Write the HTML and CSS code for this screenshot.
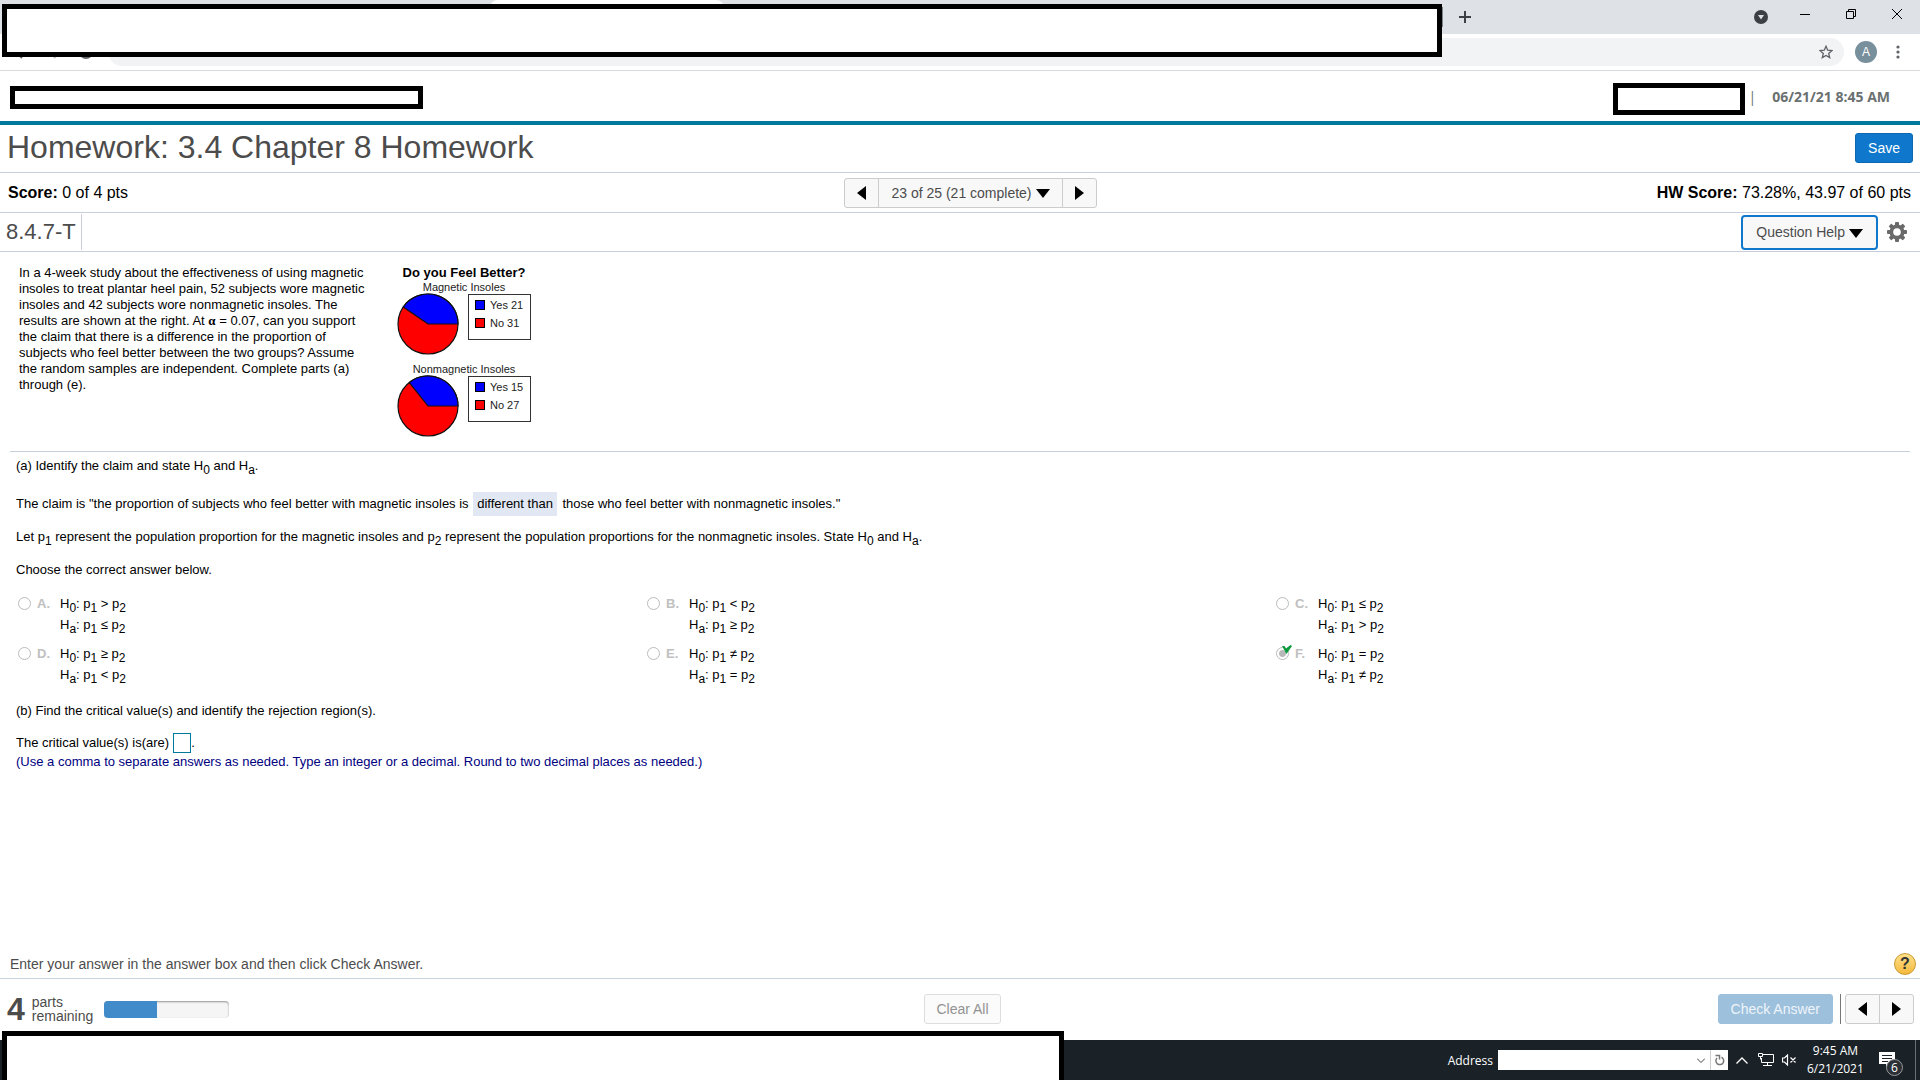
FILE: index.html
```
<!DOCTYPE html>
<html lang="en">
<head>
  <meta charset="UTF-8">
  <meta name="viewport" content="width=device-width, initial-scale=1.0">
  <title>Homework: 3.4 Chapter 8 Homework</title>
  <link rel="stylesheet" href="styles.css">
</head>
<body>
  <!-- browser chrome -->
  <div class="browser">
    <div class="tab-strip">
      <div class="tab"></div>
      <span class="tab-divider"></span>
      <button class="icon-button new-tab" aria-label="New tab">
        <svg width="12" height="12" viewBox="0 0 12 12"><path d="M6 0v12M0 6h12" stroke="#3c4043" stroke-width="2"/></svg>
      </button>
      <div class="window-controls">
        <button class="icon-button tab-search" aria-label="Search tabs">
          <svg width="14" height="14" viewBox="0 0 14 14"><circle cx="7" cy="7" r="7" fill="#3c4043"/><path d="M4 5h6l-3 4.500z" fill="#dee1e6"/></svg>
        </button>
        <button class="icon-button" aria-label="Minimize">
          <svg width="10" height="10" viewBox="0 0 10 10"><path d="M0 5.500h10" stroke="#000"/></svg>
        </button>
        <button class="icon-button" aria-label="Restore">
          <svg width="10" height="10" viewBox="0 0 10 10"><path d="M.5 2.500h7v7h-7zM2.500 2.500v-2h7v7h-2" fill="none" stroke="#000"/></svg>
        </button>
        <button class="icon-button" aria-label="Close">
          <svg width="10" height="10" viewBox="0 0 10 10"><path d="M0 0l10 10M10 0L0 10" stroke="#000"/></svg>
        </button>
      </div>
    </div>
    <div class="toolbar">
      <div class="nav-icons">
        <svg width="90" height="26" viewBox="0 0 90 26"><path d="M8 13l6 6" stroke="#5f6368" stroke-width="2"/><path d="M52 13l-6 6" stroke="#babcbe" stroke-width="2"/><circle cx="78" cy="13" r="6" fill="none" stroke="#5f6368" stroke-width="2"/></svg>
      </div>
      <div class="omnibox">
        <button class="icon-button" aria-label="Bookmark this tab">
          <svg width="14" height="14" viewBox="0 0 14 14"><path d="M7 1.200l1.700 4 4.300.4-3.300 2.800 1 4.200L7 10.400l-3.700 2.200 1-4.200L1 5.600l4.300-.4z" fill="none" stroke="#5f6368" stroke-width="1.300"/></svg>
        </button>
      </div>
      <span class="avatar">A</span>
      <button class="icon-button" aria-label="Menu">
        <svg width="4" height="14" viewBox="0 0 4 14" fill="#5f6368"><circle cx="2" cy="2" r="1.600"/><circle cx="2" cy="7" r="1.600"/><circle cx="2" cy="12" r="1.600"/></svg>
      </button>
    </div>
    <div class="redacted redacted-address"></div>
  </div>

  <header class="site-header">
    <div class="redacted course"></div>
    <div class="user-info">
      <div class="redacted user"></div>
      <span class="pipe">|</span>
      <span class="date">06/21/21 8:45 AM</span>
    </div>
  </header>

  <div class="title-row">
    <h1>Homework: 3.4 Chapter 8 Homework</h1>
    <button class="btn btn-primary">Save</button>
  </div>

  <div class="score-row">
    <div><b>Score:</b> 0 of 4 pts</div>
    <div class="btn-group question-nav">
      <button class="btn arrow" aria-label="Previous question"><svg width="9" height="14" viewBox="0 0 9 14"><path d="M9 0v14L0 7z"/></svg></button>
      <button class="btn">23 of 25 (21 complete)<svg class="caret" width="14" height="9" viewBox="0 0 14 9"><path d="M0 0h14L7 9z"/></svg></button>
      <button class="btn arrow" aria-label="Next question"><svg width="9" height="14" viewBox="0 0 9 14"><path d="M0 0v14l9-7z"/></svg></button>
    </div>
    <div class="hw-score"><b>HW Score:</b> 73.28%, 43.97 of 60 pts</div>
  </div>

  <div class="exercise-row">
    <h2>8.4.7-T</h2>
    <button class="btn question-help">Question Help<svg class="caret" width="14" height="9" viewBox="0 0 14 9"><path d="M0 0h14L7 9z"/></svg></button>
    <button class="icon-button" aria-label="Settings">
      <svg width="20" height="20" viewBox="0 0 20 20">
        <g fill="#6a6a6a">
          <rect x="8" y="0" width="4" height="20" rx="1"/>
          <rect x="8" y="0" width="4" height="20" rx="1" transform="rotate(45 10 10)"/>
          <rect x="8" y="0" width="4" height="20" rx="1" transform="rotate(90 10 10)"/>
          <rect x="8" y="0" width="4" height="20" rx="1" transform="rotate(135 10 10)"/>
          <circle cx="10" cy="10" r="7.500"/>
        </g>
        <circle cx="10" cy="10" r="3.800" fill="#fff"/>
      </svg>
    </button>
  </div>

  <main>
    <section class="question">
      <p class="prompt">In a 4-week study about the effectiveness of using magnetic insoles to treat plantar heel pain, 52 subjects wore magnetic insoles and 42 subjects wore nonmagnetic insoles. The results are shown at the right. At <span class="alpha">α</span> = 0.07, can you support the claim that there is a difference in the proportion of subjects who feel better between the two groups? Assume the random samples are independent. Complete parts (a) through (e).</p>
      <div class="charts">
        <h3>Do you Feel Better?</h3>
        <h4>Magnetic Insoles</h4>
        <div class="chart">
          <svg width="62" height="62" viewBox="-31 -31 62 62" stroke="#111" stroke-width="1.200">
            <circle r="30" fill="#f00"/>
            <path d="M0 0H30A30 30 0 0 0 -24.700 -17z" fill="#00f"/>
          </svg>
          <ul class="legend">
            <li><i class="yes"></i>Yes 21</li>
            <li><i class="no"></i>No 31</li>
          </ul>
        </div>
        <h4>Nonmagnetic Insoles</h4>
        <div class="chart">
          <svg width="62" height="62" viewBox="-31 -31 62 62" stroke="#111" stroke-width="1.200">
            <circle r="30" fill="#f00"/>
            <path d="M0 0H30A30 30 0 0 0 -18.700 -23.500z" fill="#00f"/>
          </svg>
          <ul class="legend">
            <li><i class="yes"></i>Yes 15</li>
            <li><i class="no"></i>No 27</li>
          </ul>
        </div>
      </div>
    </section>

    <section class="parts">
      <p>(a) Identify the claim and state H<sub>0</sub> and H<sub>a</sub>.</p>
      <p class="claim">The claim is "the proportion of subjects who feel better with magnetic insoles is <span class="answered">different than</span> those who feel better with nonmagnetic insoles."</p>
      <p>Let p<sub>1</sub> represent the population proportion for the magnetic insoles and p<sub>2</sub> represent the population proportions for the nonmagnetic insoles. State H<sub>0</sub> and H<sub>a</sub>.</p>
      <p>Choose the correct answer below.</p>

      <div class="choices">
        <div class="choice">
          <input type="radio" name="hyp" id="a" disabled>
          <label for="a"><b>A.</b><span class="hyp"><span>H<sub>0</sub>: p<sub>1</sub> &gt; p<sub>2</sub></span><span>H<sub>a</sub>: p<sub>1</sub> ≤ p<sub>2</sub></span></span></label>
        </div>
        <div class="choice">
          <input type="radio" name="hyp" id="b" disabled>
          <label for="b"><b>B.</b><span class="hyp"><span>H<sub>0</sub>: p<sub>1</sub> &lt; p<sub>2</sub></span><span>H<sub>a</sub>: p<sub>1</sub> ≥ p<sub>2</sub></span></span></label>
        </div>
        <div class="choice">
          <input type="radio" name="hyp" id="c" disabled>
          <label for="c"><b>C.</b><span class="hyp"><span>H<sub>0</sub>: p<sub>1</sub> ≤ p<sub>2</sub></span><span>H<sub>a</sub>: p<sub>1</sub> &gt; p<sub>2</sub></span></span></label>
        </div>
        <div class="choice">
          <input type="radio" name="hyp" id="d" disabled>
          <label for="d"><b>D.</b><span class="hyp"><span>H<sub>0</sub>: p<sub>1</sub> ≥ p<sub>2</sub></span><span>H<sub>a</sub>: p<sub>1</sub> &lt; p<sub>2</sub></span></span></label>
        </div>
        <div class="choice">
          <input type="radio" name="hyp" id="e" disabled>
          <label for="e"><b>E.</b><span class="hyp"><span>H<sub>0</sub>: p<sub>1</sub> ≠ p<sub>2</sub></span><span>H<sub>a</sub>: p<sub>1</sub> = p<sub>2</sub></span></span></label>
        </div>
        <div class="choice">
          <input type="radio" name="hyp" id="f" checked disabled>
          <svg class="check" width="10" height="9" viewBox="0 0 10 9"><path d="M0 1h2.500l1.500 2.500L8.500 0 10 1 4.500 9z" fill="#0a9a3c"/></svg>
          <label for="f"><b>F.</b><span class="hyp"><span>H<sub>0</sub>: p<sub>1</sub> = p<sub>2</sub></span><span>H<sub>a</sub>: p<sub>1</sub> ≠ p<sub>2</sub></span></span></label>
        </div>
      </div>

      <p class="part-b">(b) Find the critical value(s) and identify the rejection region(s).</p>
      <p class="critical"><label for="critical">The critical value(s) is(are)</label> <input type="text" id="critical">.</p>
      <p class="hint">(Use a comma to separate answers as needed. Type an integer or a decimal. Round to two decimal places as needed.)</p>
    </section>
  </main>

  <div class="instruction">
    <span>Enter your answer in the answer box and then click Check Answer.</span>
    <button class="help" aria-label="Help">?</button>
  </div>

  <footer>
    <div class="remaining">
      <b>4</b>
      <span>parts<br>remaining</span>
      <div class="progress"><div class="progress-bar"></div></div>
    </div>
    <button class="btn clear" disabled>Clear All</button>
    <div class="actions">
      <button class="btn btn-check" disabled>Check Answer</button>
      <span class="separator"></span>
      <div class="btn-group">
        <button class="btn arrow" aria-label="Previous"><svg width="9" height="14" viewBox="0 0 9 14"><path d="M9 0v14L0 7z"/></svg></button>
        <button class="btn arrow" aria-label="Next"><svg width="9" height="14" viewBox="0 0 9 14"><path d="M0 0v14l9-7z"/></svg></button>
      </div>
    </div>
  </footer>

  <!-- windows taskbar -->
  <div class="taskbar">
    <div class="redacted redacted-taskbar"></div>
    <label for="address">Address</label>
    <div class="address-box">
      <input type="text" id="address">
      <svg width="8" height="5" viewBox="0 0 8 5"><path d="M0 .5l4 4 4-4" fill="none" stroke="#444"/></svg>
      <button class="icon-button reload" aria-label="Go">
        <svg width="10" height="12" viewBox="0 0 10 12"><path d="M6.500 3.200A3.900 3.900 0 1 1 2 4M.5 1.500h4v4" fill="none" stroke="#777" stroke-width="1.500"/></svg>
      </button>
    </div>
    <svg class="chevron" width="12" height="7" viewBox="0 0 12 7"><path d="M.5 6.500L6 1l5.500 5.500" fill="none" stroke="#fff" stroke-width="1.300"/></svg>
    <svg class="network" width="16" height="14" viewBox="0 0 16 14"><path d="M5 1.500h10.500v8H3.500V5M9.500 9.500v3M5 12.500h9M.5 .5h4v3h-4zM2.500 3.500v3" fill="none" stroke="#fff"/></svg>
    <svg class="volume" width="15" height="12" viewBox="0 0 15 12"><path d="M.5 4v4h2L5.500 11V1L2.500 4zM8.500 3.500l5 5M13.500 3.500l-5 5" fill="none" stroke="#fff" stroke-width="1.200"/></svg>
    <div class="clock"><span>9:45 AM</span><span>6/21/2021</span></div>
    <div class="notifications">
      <svg width="16" height="16" viewBox="0 0 16 16"><path d="M0 0h16v12h-6l-3 4v-4H0z" fill="#fff"/><path d="M3 3.500h10M3 6.500h10M3 9.500h6" stroke="#1a2228"/></svg>
      <span class="count">6</span>
    </div>
    <span class="show-desktop"></span>
  </div>
</body>
</html>
```
FILE: styles.css
```
* {
  box-sizing: border-box;
}

body {
  margin: 0;
  min-height: 100vh;
  display: flex;
  flex-direction: column;
  font-family: "Liberation Sans", Arial, sans-serif;
  font-size: 13px;
  color: #000;
  background: #fff;
}

h1, h2, h3, h4, p, ul {
  margin: 0;
  padding: 0;
}

svg {
  display: block;
  flex: none;
}

.icon-button {
  display: flex;
  align-items: center;
  justify-content: center;
  padding: 0;
  border: 0;
  background: none;
}

.redacted {
  border: 5px solid #000;
  background: #fff;
}

/* browser */
.browser {
  position: relative;
}

.tab-strip {
  display: flex;
  height: 34px;
  padding-left: 490px;
  background: #dee1e6;
}

.tab {
  width: 234px;
  border-radius: 8px 8px 0 0;
  background: #fff;
}

.tab-divider {
  width: 1px;
  height: 20px;
  margin: 7px 0 0 718px;
  background: #80868b;
}

.new-tab {
  margin-left: 16px;
}

.window-controls {
  display: flex;
  gap: 36px;
  height: 28px;
  margin-left: auto;
  padding-right: 18px;
}

.tab-search {
  margin-right: -4px;
  padding-top: 6px;
}

.toolbar {
  display: flex;
  align-items: center;
  height: 37px;
  padding-right: 20px;
  border-bottom: 1px solid #d9dadd;
}

.nav-icons {
  width: 108px;
  padding-left: 8px;
}

.omnibox {
  flex: 1;
  display: flex;
  justify-content: flex-end;
  height: 28px;
  padding-right: 11px;
  border-radius: 14px;
  background: #f1f3f4;
}

.avatar {
  width: 22px;
  margin: 0 19px 0 11px;
  border-radius: 50%;
  background: #78909c;
  color: #fff;
  font-size: 12px;
  line-height: 22px;
  text-align: center;
}

.redacted-address {
  position: absolute;
  top: 4px;
  left: 2px;
  width: 75%;
  height: 53px;
}

/* site header */
.site-header {
  display: flex;
  justify-content: space-between;
  align-items: center;
  height: 54px;
  padding: 0 30px 0 10px;
  border-bottom: 4px solid #007a9c;
}

.course {
  width: 413px;
  height: 23px;
  margin-top: 2px;
}

.user-info {
  display: flex;
  align-items: center;
  color: #6a7070;
  font: 700 14px "Open Sans", sans-serif;
}

.user {
  width: 132px;
  height: 32px;
  margin-top: 6px;
}

.pipe {
  margin: 0 16px 0 4px;
  font-weight: 400;
}

/* title and score rows */
.title-row, .score-row, .exercise-row {
  display: flex;
  align-items: center;
  border-bottom: 1px solid #c8cddc;
}

.title-row {
  justify-content: space-between;
  height: 48px;
  padding: 0 7px 2px;
}

h1 {
  padding-bottom: 2px;
  color: #4c4c4c;
  font-size: 32px;
  font-weight: 400;
  line-height: 40px;
}

.score-row {
  display: grid;
  grid-template-columns: 1fr auto 1fr;
  height: 40px;
  padding: 0 9px 0 8px;
  font-size: 16px;
}

.question-nav {
  margin-left: 22px;
}

.hw-score {
  text-align: right;
}

.exercise-row {
  gap: 9px;
  height: 39px;
  padding: 0 13px 0 6px;
}

h2 {
  margin-right: auto;
  padding-right: 5px;
  border-right: 1px solid #c8cddc;
  color: #4c4c4c;
  font-size: 22px;
  font-weight: 400;
  line-height: 36px;
}

.btn {
  display: flex;
  align-items: center;
  justify-content: center;
  height: 30px;
  padding: 0 12px;
  border: 1px solid #ccc;
  border-radius: 3px;
  background: #f8f8f8;
  color: #4c4c4c;
  font: 14px "Liberation Sans", Arial, sans-serif;
}

.btn svg {
  fill: #000;
}

.caret {
  margin: 2px 0 0 4px;
}

.btn-primary {
  border-color: #0c68b0;
  background: #0f78cc;
  color: #fff;
}

.btn-group {
  display: flex;
}

.btn-group .btn + .btn {
  margin-left: -1px;
}

.btn-group .btn:not(:first-child) {
  border-top-left-radius: 0;
  border-bottom-left-radius: 0;
}

.btn-group .btn:not(:last-child) {
  border-top-right-radius: 0;
  border-bottom-right-radius: 0;
}

.arrow {
  width: 35px;
  padding: 0;
}

.question-help {
  height: 35px;
  padding: 0 13px;
  border: 2px solid #0f78cc;
  border-radius: 4px;
}

/* question */
main {
  flex: 1;
}

.question {
  display: flex;
  gap: 26px;
  margin: 0 10px;
  padding: 13px 0 6px 9px;
  border-bottom: 1px solid #c8cddc;
}

.prompt {
  width: 352px;
  line-height: 16px;
}

.alpha {
  font-family: "Liberation Serif", serif;
  font-weight: 700;
}

.charts {
  width: 134px;
}

h3 {
  font-size: 13px;
  line-height: 16px;
  text-align: center;
}

h4 {
  color: #222;
  font-size: 11px;
  font-weight: 400;
  line-height: 12px;
  text-align: center;
}

.chart {
  display: flex;
  gap: 9px;
  margin-bottom: 8px;
}

.legend {
  width: 63px;
  height: 46px;
  margin-top: 1px;
  padding: 1px 6px;
  border: 1px solid #333;
  color: #222;
  font-size: 11px;
  line-height: 18px;
  list-style: none;
}

.legend li {
  display: flex;
  align-items: center;
  gap: 5px;
}

.legend i {
  width: 10px;
  height: 10px;
  border: 1px solid #000;
}

.yes {
  background: #00f;
}

.no {
  background: #f00;
}

/* parts */
.parts {
  padding: 6px 17px 0 16px;
}

.parts p {
  margin-bottom: 17px;
  line-height: 16px;
}

sub {
  position: relative;
  top: 4px;
  font-size: 12px;
  line-height: 0;
  vertical-align: baseline;
}

.parts .claim {
  margin: 18px 0 13px;
  line-height: 24px;
}

.answered {
  display: inline-block;
  margin: 0 2px 0 1px;
  padding: 0 4px;
  background: #e1e8f3;
}

.choices {
  display: grid;
  grid-template-columns: repeat(3, 1fr);
  row-gap: 10px;
  padding-bottom: 18px;
}

.choice {
  position: relative;
  display: flex;
  align-items: flex-start;
  gap: 6px;
}

.choice input {
  appearance: none;
  width: 13px;
  height: 13px;
  margin: 2px 0 0 2px;
  border: 1px solid #bbb;
  border-radius: 50%;
  background: #fff;
}

.choice input:checked {
  background: radial-gradient(circle, #b8b8b8 3px, #fff 4px);
}

.choice label {
  display: flex;
  line-height: 21px;
}

.choice b {
  width: 23px;
  color: #c0c0c0;
  line-height: 17px;
}

.hyp {
  display: grid;
  margin-top: -2px;
}

/* green tick over the selected answer */
.check {
  position: absolute;
  top: 0;
  left: 8px;
}

.parts .part-b {
  margin-bottom: 14px;
}

.parts .critical {
  display: flex;
  align-items: center;
  gap: 4px;
  height: 20px;
  margin: 0;
}

.critical input {
  width: 18px;
  height: 20px;
  margin-right: -4px;
  border: 1px solid #007a9c;
}

.parts .hint {
  color: #00007f;
  line-height: 18px;
}

/* bottom */
.instruction {
  display: flex;
  align-items: center;
  justify-content: space-between;
  height: 30px;
  padding: 0 4px 0 10px;
  border-bottom: 1px solid #c8d3dd;
  color: #4c4c4c;
  font-size: 14px;
}

.help {
  width: 22px;
  height: 22px;
  padding: 0;
  border: 1px solid #c99b33;
  border-radius: 50%;
  background: linear-gradient(#ffe08a, #f5b93c);
  color: #333;
  font: 700 16px "Liberation Sans", Arial, sans-serif;
}

footer {
  display: grid;
  grid-template-columns: 1fr auto 1fr;
  align-items: center;
  height: 61px;
  padding: 0 6px 2px 7px;
}

.remaining {
  display: flex;
  align-items: center;
  color: #4c4c4c;
  font-size: 14px;
  line-height: 14px;
}

.remaining b {
  margin-right: 7px;
  font-size: 32px;
}

.progress {
  width: 125px;
  height: 17px;
  margin: 2px 0 0 11px;
  border-radius: 4px;
  overflow: hidden;
  background: #f5f5f5;
  box-shadow: inset 0 1px 2px rgba(0, 0, 0, .4);
}

.progress-bar {
  width: 42.5%;
  height: 100%;
  background: #428bca;
}

.clear {
  margin-left: 4px;
  padding: 0 11px;
  border-color: #ddd;
  background: #fbfbfb;
  color: #929292;
}

.actions {
  display: flex;
  justify-content: flex-end;
}

.btn-check {
  border-color: #9dc0dc;
  background: #9dc0dc;
  color: #eef4fa;
}

.separator {
  width: 1px;
  margin: 0 4px 0 7px;
  background: #777;
}

/* taskbar */
.taskbar {
  position: relative;
  display: flex;
  align-items: center;
  justify-content: flex-end;
  height: 40px;
  background: #1a2228;
  color: #fff;
  font: 12px "Open Sans", sans-serif;
}

.redacted-taskbar {
  position: absolute;
  top: -9px;
  bottom: 0;
  left: 2px;
  width: 1062px;
  border-bottom: 0;
}

.taskbar label {
  margin-right: 5px;
}

.address-box {
  display: flex;
  align-items: center;
  width: 230px;
  height: 20px;
  background: #fff;
}

.address-box input {
  flex: 1;
  min-width: 0;
  height: 20px;
  padding: 0 4px;
  border: 0;
}

.reload {
  width: 18px;
  height: 20px;
  margin-left: 5px;
  border-left: 1px solid #ccc;
}

.chevron {
  margin-left: 8px;
}

.network {
  margin-left: 10px;
}

.volume {
  margin-left: 8px;
}

.clock {
  display: grid;
  width: 56px;
  margin-left: 10px;
  line-height: 18px;
  text-align: center;
}

.notifications {
  position: relative;
  margin: 0 20px 0 16px;
}

.count {
  position: absolute;
  top: 7px;
  left: 7px;
  width: 17px;
  height: 17px;
  border: 1px solid #999;
  border-radius: 50%;
  background: #2a3036;
  line-height: 15px;
  text-align: center;
}

.show-desktop {
  width: 5px;
  height: 40px;
  border-left: 1px solid #6a7075;
}
```
